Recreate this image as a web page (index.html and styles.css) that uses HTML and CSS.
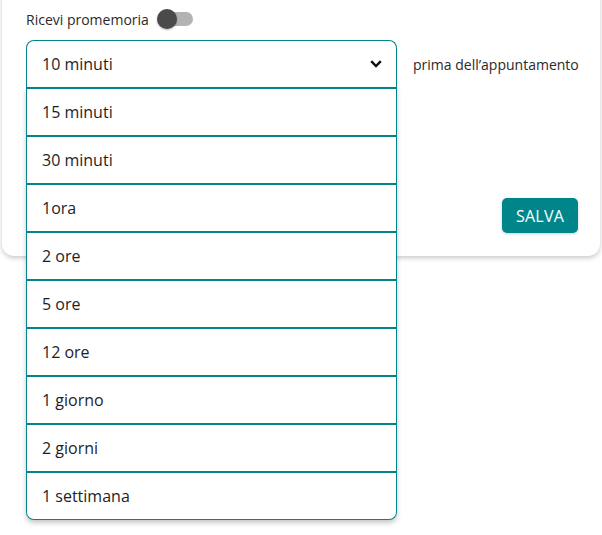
FILE: index.html
```html
<!DOCTYPE html>
<html lang="it">
<head>
<meta charset="utf-8">
<title>Promemoria</title>
<link rel="stylesheet" href="styles.css">
</head>
<body>
<div class="card">
  <div class="toggle-row">
    <span class="toggle-label">Ricevi promemoria</span>
    <span class="switch"><span class="track"></span><span class="thumb"></span></span>
  </div>
  <div class="select-row">
    <div class="select">
      <div class="select-head">
        <span>10 minuti</span>
        <svg class="chevron" width="12" height="8" viewBox="0 0 12 8"><polyline points="1.2,1.2 6,6 10.8,1.2" fill="none" stroke="#111" stroke-width="2.4"/></svg>
      </div>
      <ul class="menu">
        <li>15 minuti</li>
        <li>30 minuti</li>
        <li>1ora</li>
        <li>2 ore</li>
        <li>5 ore</li>
        <li>12 ore</li>
        <li>1 giorno</li>
        <li>2 giorni</li>
        <li>1 settimana</li>
      </ul>
    </div>
    <span class="suffix">prima dell’appuntamento</span>
  </div>
  <div class="actions">
    <button class="save">SALVA</button>
  </div>
</div>
</body>
</html>
```

FILE: styles.css
```css
html {
  height: 535px;
  overflow: hidden;
}
body {
  margin: 0;
  padding: 0;
  height: 535px;
  background: #fff;
  font-family: "Open Sans", "Noto Sans", sans-serif;
  color: #222;
}
.card {
  margin: -16px 2px 0 2px;
  padding: 16px 22px 23px 24px;
  background: #fff;
  border-radius: 0 0 12px 12px;
  box-shadow: 0 2px 5px rgba(0, 0, 0, 0.22);
}
.toggle-row {
  display: flex;
  align-items: center;
  height: 20px;
  padding-top: 9px;
  margin-bottom: 11px;
  gap: 8px;
}
.toggle-label {
  font-size: 14px;
  color: #2a2a2a;
}
.switch {
  position: relative;
  width: 36px;
  height: 20px;
}
.track {
  position: absolute;
  left: 2px;
  top: 3px;
  width: 34px;
  height: 14px;
  border-radius: 7px;
  background: #b3b3b3;
}
.thumb {
  position: absolute;
  left: 0;
  top: 0;
  width: 20px;
  height: 20px;
  border-radius: 50%;
  background: #4a4a4a;
  box-shadow: 0 1px 2px rgba(0, 0, 0, 0.3);
}
.select-row {
  display: flex;
  align-items: center;
  gap: 16px;
}
.select {
  position: relative;
  width: 371px;
  flex: none;
}
.select-head {
  box-sizing: border-box;
  height: 47px;
  border: 1px solid #00868a;
  border-bottom: none;
  border-radius: 8px 8px 0 0;
  display: flex;
  align-items: center;
  justify-content: space-between;
  padding: 0 14px 0 15px;
  font-size: 16px;
  color: #1e1e1e;
}
.chevron {
  display: block;
}
.menu {
  position: absolute;
  top: 100%;
  left: 0;
  right: 0;
  margin: 0;
  padding: 0;
  list-style: none;
  background: #fff;
  border: 1px solid #00868a;
  border-top: none;
  border-radius: 0 0 8px 8px;
  box-shadow: 0 3px 5px rgba(0, 0, 0, 0.22);
  z-index: 2;
}
.menu li {
  height: 46px;
  border-top: 2px solid #00868a;
  display: flex;
  align-items: center;
  padding-left: 15px;
  font-size: 16px;
  color: #1e1e1e;
}
.suffix {
  font-size: 14px;
  color: #2a2a2a;
  margin-top: 2px;
  white-space: nowrap;
}
.actions {
  display: flex;
  justify-content: flex-end;
  margin-top: 111px;
}
.save {
  width: 76px;
  height: 35px;
  border: none;
  border-radius: 5px;
  background: #00868a;
  color: #fff;
  font-family: "Open Sans", "Noto Sans", sans-serif;
  font-size: 16px;
  font-weight: 400;
  letter-spacing: 0.2px;
  box-shadow: 0 1px 3px rgba(0, 0, 0, 0.2);
  padding: 0;
}
```
